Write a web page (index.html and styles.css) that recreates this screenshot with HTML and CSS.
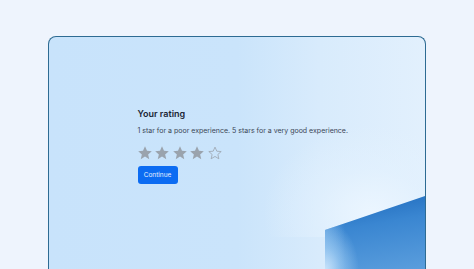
FILE: index.html
```html
<!DOCTYPE html>
<html>
<head>
<meta charset="utf-8">
<link rel="stylesheet" href="styles.css">
</head>
<body>
<div class="card">
  <div class="glow"></div>
  <div class="fold"></div>
  <div class="content">
    <h1 class="title">Your rating</h1>
    <p class="sub">1 star for a poor experience. 5 stars for a very good experience.</p>
    <div class="stars">
      <svg class="star" viewBox="0 0 24 24"><path class="on" d="M12 2l3 6.7 7.2.6-5.5 4.8 1.7 7.1-6.4-3.8-6.4 3.8 1.7-7.1-5.5-4.8 7.2-.6z"/></svg>
      <svg class="star" viewBox="0 0 24 24"><path class="on" d="M12 2l3 6.7 7.2.6-5.5 4.8 1.7 7.1-6.4-3.8-6.4 3.8 1.7-7.1-5.5-4.8 7.2-.6z"/></svg>
      <svg class="star" viewBox="0 0 24 24"><path class="on" d="M12 2l3 6.7 7.2.6-5.5 4.8 1.7 7.1-6.4-3.8-6.4 3.8 1.7-7.1-5.5-4.8 7.2-.6z"/></svg>
      <svg class="star" viewBox="0 0 24 24"><path class="on" d="M12 2l3 6.7 7.2.6-5.5 4.8 1.7 7.1-6.4-3.8-6.4 3.8 1.7-7.1-5.5-4.8 7.2-.6z"/></svg>
      <svg class="star" viewBox="0 0 24 24"><path class="off" d="M12 3.2l2.7 6.1 6.6.5-5 4.4 1.5 6.5-5.8-3.5-5.8 3.5 1.5-6.5-5-4.4 6.6-.5z"/></svg>
    </div>
    <button class="btn">Continue</button>
  </div>
</div>
</body>
</html>
```
FILE: styles.css
```css
html, body {
  margin: 0;
  padding: 0;
}
body {
  width: 474px;
  height: 269px;
  overflow: hidden;
  background: #eef4fd;
  font-family: Inter, "Noto Sans", sans-serif;
}
.card {
  position: relative;
  box-sizing: border-box;
  margin: 36px 0 0 48px;
  width: 378px;
  height: 233px;
  border: 1.5px solid #2d6b93;
  border-bottom: 0;
  border-radius: 8px 8px 0 0;
  background: linear-gradient(90deg, #c8e3fb 0%, #cae4fb 50%, #d8ebfc 72%, #e2f0fd 100%);
  overflow: hidden;
}
.glow {
  position: absolute;
  left: 200px;
  top: 40px;
  width: 180px;
  height: 160px;
  background: radial-gradient(ellipse 60% 55% at 68% 85%, rgba(236,246,255,0.95) 0%, rgba(228,242,254,0.55) 50%, rgba(220,237,252,0) 100%);
}
.fold {
  position: absolute;
  left: 276px;
  top: 159px;
  width: 100px;
  height: 74px;
  clip-path: polygon(0 34px, 100px 0, 100px 74px, 0 74px);
  background:
    radial-gradient(ellipse 34px 50px at 0 100%, rgba(205,230,252,0.95) 0%, rgba(170,212,247,0.6) 45%, rgba(120,180,235,0) 100%),
    linear-gradient(90deg, rgba(150,200,242,0.45) 0px, rgba(120,180,235,0) 20px),
    linear-gradient(170deg, #1b67ba 0%, #3a86d1 40%, #5b9edd 100%);
}
.content {
  position: relative;
  padding: 71px 0 0 88.5px;
}
.title {
  margin: 0;
  font-size: 9px;
  font-weight: 600;
  color: #1b2433;
  line-height: 12px;
}
.sub {
  margin: 6px 0 0;
  font-size: 7px;
  color: #3a4555;
  line-height: 10px;
}
.stars {
  display: flex;
  gap: 1.6px;
  margin-top: 9px;
  margin-left: -1px;
}
.star {
  width: 16px;
  height: 16px;
}
.on {
  fill: #9aa3ad;
}
.off {
  fill: none;
  stroke: #9aa3ad;
  stroke-width: 1.2;
  stroke-linejoin: round;
}
.btn {
  display: block;
  margin-top: 5px;
  width: 40px;
  height: 18px;
  border: 0;
  border-radius: 3px;
  background: #0c6cf2;
  color: #e8f1ff;
  font-family: Inter, "Noto Sans", sans-serif;
  font-size: 6.5px;
  padding: 0;
}
```
